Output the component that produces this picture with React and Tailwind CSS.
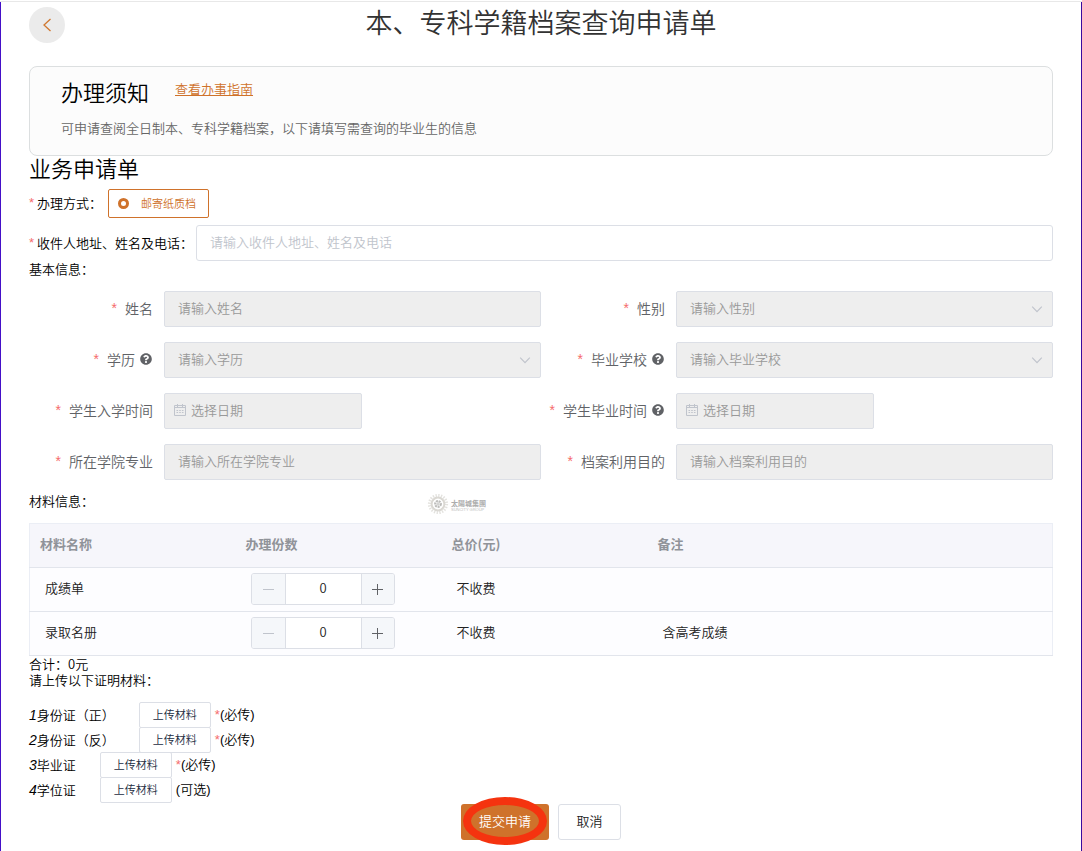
import { useState } from 'react';
import { FaQuestionCircle } from 'react-icons/fa';

const fields = [
    { id: 'name', label: '姓名', type: 'text', placeholder: '请输入姓名' },
    { id: 'gender', label: '性别', type: 'select', placeholder: '请输入性别' },
    { id: 'degree', label: '学历', type: 'select', placeholder: '请输入学历', help: true },
    { id: 'school', label: '毕业学校', type: 'select', placeholder: '请输入毕业学校', help: true },
    { id: 'start', label: '学生入学时间', type: 'date', placeholder: '选择日期' },
    { id: 'end', label: '学生毕业时间', type: 'date', placeholder: '选择日期', help: true },
    { id: 'major', label: '所在学院专业', type: 'text', placeholder: '请输入所在学院专业' },
    { id: 'purpose', label: '档案利用目的', type: 'text', placeholder: '请输入档案利用目的' },
];

const materials = [
    { name: '成绩单', price: '不收费', remark: '' },
    { name: '录取名册', price: '不收费', remark: '含高考成绩' },
];

const uploads = [
    { name: '身份证（正）', required: true },
    { name: '身份证（反）', required: true },
    { name: '毕业证', required: true },
    { name: '学位证', required: false },
];

const Star = () => <span className="font-['Liberation_Sans',sans-serif] text-[#f56c6c]">*</span>;

function ChevronIcon({ className }) {
    return <svg className={className} width="12" height="12" viewBox="0 0 12 12" fill="none" stroke="currentColor" strokeWidth="1.2"><path d="M1.2 3.6 6 8.6l4.8-5" /></svg>;
}

function CalendarIcon({ className }) {
    return (
        <svg className={className} width="12" height="12" viewBox="0 0 12 12" fill="none" stroke="currentColor">
            <path d="M.5 1.5h11v10H.5z" />
            <path d="M.5 3.5h11M3.5 0v3M8.5 0v3" />
            <path d="M2.5 6.5h7M2.5 8.5h7" strokeDasharray="1.6 1.1" />
        </svg>
    );
}

function CompanyLogo() {
    return (
        <svg width="60" height="22" viewBox="0 0 60 22" aria-hidden="true">
            <g fill="none" stroke="#dad8d3">
                <circle cx="11" cy="11" r="8.6" strokeWidth="3" strokeDasharray="1.3 1.4" opacity=".75" />
                <circle cx="11" cy="11" r="6.4" strokeWidth="2" />
                <circle cx="11" cy="11" r="2.9" strokeWidth="2" strokeDasharray="2 .8" stroke="#bcbcba" />
                <path d="M11 8.5v5M8.5 11h5" strokeWidth=".8" stroke="#bcbcba" />
            </g>
            <text x="24" y="13" fontSize="7" fontWeight="700" fill="#adadad">太陽城集團</text>
            <text x="24" y="18" fontSize="4" fill="#bbb" fontFamily="Liberation Sans">SUNCITY GROUP</text>
        </svg>
    );
}

function Field({ field }) {
    const box = 'h-9 rounded-xs border border-[#dcdfe6] bg-[#eee] pb-[3px] text-[13px] text-[#999] placeholder-[#999] opacity-100';
    return (
        <div className="flex items-center">
            <label htmlFor={field.id} className="flex w-[135px] shrink-0 items-center justify-end pr-[11px] pb-[3px] text-sm text-[#606266]">
                <Star />
                <span className="ml-2">{field.label}</span>
                {field.help && <FaQuestionCircle className="mt-px mr-px ml-[5px]" size={12} />}
            </label>
            {field.type === 'text' && <input id={field.id} disabled placeholder={field.placeholder} className={`${box} w-full min-w-0 px-[13px]`} />}
            {field.type === 'select' && (
                <div className="relative w-full min-w-0">
                    <select id={field.id} disabled className={`${box} w-full appearance-none px-[13px]`}>
                        <option>{field.placeholder}</option>
                    </select>
                    <ChevronIcon className="absolute top-3 right-[10px] text-[#c0c4cc]" />
                </div>
            )}
            {field.type === 'date' && (
                <div className="relative">
                    <CalendarIcon className="absolute top-[11px] left-[10px] text-[#c0c4cc]" />
                    <input id={field.id} disabled placeholder={field.placeholder} className={`${box} w-[198px] pr-3 pl-[26px]`} />
                </div>
            )}
        </div>
    );
}

function Stepper({ label, value, onChange }) {
    return (
        <div className="flex h-8 w-36 overflow-hidden rounded-[3px] border border-[#dcdfe6]">
            <button type="button" aria-label="减少" disabled={value === 0} onClick={() => onChange(value - 1)} className="flex w-[34px] items-center justify-center border-r border-[#dcdfe6] bg-[#f5f7fa] text-[#606266] disabled:text-[#c0c4cc]">
                <svg width="11" height="11" stroke="currentColor"><path d="M0 5.5h11" /></svg>
            </button>
            <input aria-label={label} value={value} onChange={(e) => onChange(Number(e.target.value) || 0)} className="w-0 min-w-0 flex-1 bg-white pb-[2px] text-center" />
            <button type="button" aria-label="增加" onClick={() => onChange(value + 1)} className="flex w-[33px] items-center justify-center border-l border-[#dcdfe6] bg-[#f5f7fa] text-[#606266]">
                <svg width="11" height="11" stroke="currentColor"><path d="M0 5.5h11M5.5 0v11" /></svg>
            </button>
        </div>
    );
}

export default function App() {
    const [counts, setCounts] = useState([0, 0]);
    const setCount = (i, n) => setCounts(counts.map((c, j) => (j === i ? n : c)));

    return (
        <div className="flex min-h-screen flex-col bg-white pt-px font-['Noto_Sans_CJK_SC',sans-serif] text-[13px] leading-4 font-[350] text-black">
            <div className="border-t border-[#e8e8e8]" />
            <main className="flex-1 border-x border-l-[#4410c8] border-r-[#3a0a9e] px-7 pt-[5px] pb-[10px]">
                <header className="grid grid-cols-[36px_1fr_36px]">
                    <button type="button" aria-label="返回" className="flex size-9 items-center justify-center rounded-full bg-[#ebebeb] text-[#d07830]">
                        <svg width="10" height="16" viewBox="0 0 10 16" fill="none" stroke="currentColor" strokeWidth="1.3"><path d="M8.5 2 2 8l6.5 6" /></svg>
                    </button>
                    <h1 className="text-center text-[27px] leading-[30px] font-[350] text-[#333]">本、专科学籍档案查询申请单</h1>
                </header>

                <section className="mt-[23px] rounded-lg border border-[#dcdfe0] bg-[#fcfcfc] pt-[10px] pb-[19px] pl-[31px]">
                    <div className="flex items-start gap-[26px]">
                        <h2 className="text-[22px] leading-7">办理须知</h2>
                        <a href="#guide" className="mt-1 text-[#cf722b] underline">查看办事指南</a>
                    </div>
                    <p className="mt-[15px] text-[#666]">可申请查阅全日制本、专科学籍档案，以下请填写需查询的毕业生的信息</p>
                </section>

                <form onSubmit={(e) => e.preventDefault()}>
                    <h2 className="text-[22px] leading-[22px]">业务申请单</h2>
                    <div className="mt-[11px] flex items-center gap-1.5">
                        <span className="flex gap-[3px] pb-[2px]"><Star />办理方式：</span>
                        <label className="flex h-[29px] items-center rounded-xs border border-[#cf722b] pr-3 pb-px pl-[9px] text-[11px] text-[#cf722b]">
                            <input type="radio" name="way" defaultChecked className="mr-3 size-[11px] appearance-none rounded-full border-[#cf722b] checked:border-[3px]" />
                            邮寄纸质档
                        </label>
                    </div>
                    <div className="mt-[7px] flex items-center gap-[3px]">
                        <label htmlFor="address" className="flex shrink-0 gap-[3px]"><Star />收件人地址、姓名及电话：</label>
                        <input id="address" placeholder="请输入收件人地址、姓名及电话" className="h-9 min-w-0 flex-1 rounded-[3px] border border-[#dcdfe6] px-[13px] pb-[3px] placeholder-[#c0c4cc]" />
                    </div>

                    <h3>基本信息：</h3>
                    <div className="mt-[14px] grid grid-cols-2 gap-y-[15px]">
                        {fields.map(f => <Field key={f.id} field={f} />)}
                    </div>

                    <div className="mt-[13px] flex items-start">
                        <h3 className="w-[398px]">材料信息：</h3>
                        <CompanyLogo />
                    </div>
                    <table className="mt-2 w-full table-fixed border-collapse border border-[#ebeef5] bg-[#fdfdff] text-left">
                        <thead className="bg-[#f6f6fb] text-[#909399]">
                            <tr className="h-11 border-b border-[#e2e5ec]">
                                <th className="w-[206px] px-[10px] pb-1">材料名称</th>
                                <th className="w-[206px] px-[10px] pb-1">办理份数</th>
                                <th className="w-[206px] px-[10px] pb-1">总价(元)</th>
                                <th className="px-[10px] pb-1">备注</th>
                            </tr>
                        </thead>
                        <tbody className="text-[#222]">
                            {materials.map((m, i) => (
                                <tr key={m.name} className="h-11 border-b border-[#e2e5ec]">
                                    <td className="px-[15px] pb-[3px]">{m.name}</td>
                                    <td className="px-[15px] pb-px"><Stepper label={m.name} value={counts[i]} onChange={n => setCount(i, n)} /></td>
                                    <td className="px-[15px] pb-[3px]">{m.price}</td>
                                    <td className="px-[15px] pb-[3px]">{m.remark}</td>
                                </tr>
                            ))}
                        </tbody>
                    </table>
                    <p>合计：0元</p>
                    <p>请上传以下证明材料：</p>

                    <ul className="mt-[14px] -space-y-px">
                        {uploads.map((u, i) => (
                            <li key={u.name} className="flex items-center font-['Liberation_Sans','Noto_Sans_CJK_SC',sans-serif]">
                                <span className="mr-6"><i className="text-sm leading-4">{i + 1}</i>{u.name}</span>
                                <button type="button" className="mr-1 h-[26px] w-[72px] rounded-xs border border-[#dcdfe6] bg-white text-[11px] text-[#222b40]">上传材料</button>
                                {u.required && <Star />}
                                <span>(<span>{u.required ? '必传' : '可选'}</span>)</span>
                            </li>
                        ))}
                    </ul>

                    <div className="mt-px flex justify-center gap-[9px]">
                        <button type="submit" className="relative h-9 w-[88px] rounded-[3px] bg-[#cf722b] pb-[2px] text-white">
                            提交申请
                            <span className="absolute inset-x-[2px] -top-[7px] -bottom-[5px] rounded-[50%] border-8 border-[#f5330f]" />
                        </button>
                        <button type="button" className="h-9 w-[63px] rounded-[3px] border border-[#dcdfe6] bg-white pb-[2px] text-[#222]">取消</button>
                    </div>
                </form>
            </main>
        </div>
    );
}
